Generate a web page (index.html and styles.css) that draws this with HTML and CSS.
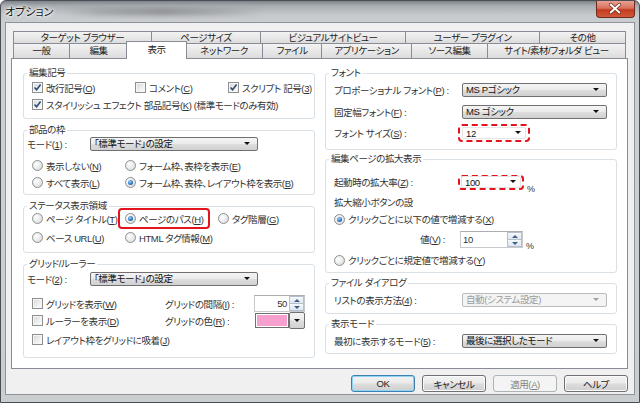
FILE: index.html
```html
<!DOCTYPE html>
<html lang="ja">
<head>
<meta charset="utf-8">
<title>オプション</title>
<link rel="stylesheet" href="styles.css">
</head>
<body>
<div class="window">
  <div class="titlebar">
    <span class="title">オプション</span>
    <span class="ghost"></span>
    <div class="close">
      <svg width="39" height="17" viewBox="0 0 39 17"><path d="M15 4.5 L24 12.5 M24 4.5 L15 12.5" stroke="#6b2318" stroke-width="3.4" stroke-linecap="round"/><path d="M15 4.5 L24 12.5 M24 4.5 L15 12.5" stroke="#ffffff" stroke-width="2" stroke-linecap="round"/></svg>
    </div>
  </div>
  <div class="client">
    <div class="tabs">
      <div class="tabrow back">
        <div class="tab">ターゲット ブラウザー</div>
        <div class="tab">ページサイズ</div>
        <div class="tab">ビジュアルサイトビュー</div>
        <div class="tab">ユーザー プラグイン</div>
        <div class="tab">その他</div>
      </div>
      <div class="tabrow front">
        <div class="tab">一般</div>
        <div class="tab">編集</div>
        <div class="tab sel">表示</div>
        <div class="tab">ネットワーク</div>
        <div class="tab">ファイル</div>
        <div class="tab">アプリケーション</div>
        <div class="tab">ソース編集</div>
        <div class="tab">サイト/素材/フォルダ ビュー</div>
      </div>
    </div>

    <div class="panel">
      <div class="col">
        <fieldset class="g g-marks">
          <legend>編集記号</legend>
          <div class="row">
            <label class="opt w103"><span class="cb"><svg width="9" height="9" viewBox="0 0 9 9"><path d="M1.5 4.5 L3.6 6.8 L7.6 1.6" fill="none" stroke="#2b4a78" stroke-width="1.6"/></svg></span><span>改行記号(<u>O</u>)</span></label>
            <label class="opt w93"><span class="cb"></span><span>コメント(<u>C</u>)</span></label>
            <label class="opt"><span class="cb"><svg width="9" height="9" viewBox="0 0 9 9"><path d="M1.5 4.5 L3.6 6.8 L7.6 1.6" fill="none" stroke="#2b4a78" stroke-width="1.6"/></svg></span><span>スクリプト 記号(<u>3</u>)</span></label>
          </div>
          <div class="row">
            <label class="opt"><span class="cb"><svg width="9" height="9" viewBox="0 0 9 9"><path d="M1.5 4.5 L3.6 6.8 L7.6 1.6" fill="none" stroke="#2b4a78" stroke-width="1.6"/></svg></span><span>スタイリッシュ エフェクト 部品記号(<u>K</u>) (標準モードのみ有効)</span></label>
          </div>
        </fieldset>

        <fieldset class="g g-frame">
          <legend>部品の枠</legend>
          <div class="row mode-row">
            <span class="mode-label">モード(<u>1</u>) :</span>
            <div class="combo w168">「標準モード」の設定</div>
          </div>
          <div class="row mt6">
            <label class="opt w93"><span class="rd"></span><span>表示しない(<u>N</u>)</span></label>
            <label class="opt"><span class="rd"></span><span>フォーム枠、表枠を表示(<u>E</u>)</span></label>
          </div>
          <div class="row">
            <label class="opt w93"><span class="rd"></span><span>すべて表示(<u>L</u>)</span></label>
            <label class="opt"><span class="rd on"></span><span>フォーム枠、表枠、レイアウト枠を表示(<u>B</u>)</span></label>
          </div>
        </fieldset>

        <fieldset class="g g-status">
          <legend>ステータス表示領域</legend>
          <div class="row mtm2">
            <label class="opt w93"><span class="rd"></span><span>ページ タイトル(<u>T</u>)</span></label>
            <div class="w93"><label class="opt mark"><span class="rd on"></span><span>ページのパス(<u>H</u>)</span></label></div>
            <label class="opt"><span class="rd"></span><span>タグ階層(<u>G</u>)</span></label>
          </div>
          <div class="row mt2">
            <label class="opt w93"><span class="rd"></span><span>ベース URL(<u>U</u>)</span></label>
            <label class="opt"><span class="rd"></span><span>HTML タグ情報(<u>M</u>)</span></label>
          </div>
        </fieldset>

        <fieldset class="g g-grid">
          <legend>グリッド/ルーラー</legend>
          <div class="row mode-row mt1">
            <span class="mode-label">モード(<u>2</u>) :</span>
            <div class="combo w168">「標準モード」の設定</div>
          </div>
          <div class="row mt9">
            <label class="opt w133"><span class="cb"></span><span>グリッドを表示(<u>W</u>)</span></label>
            <span class="glabel">グリッドの間隔(<u>I</u>) :</span>
            <div class="spin w51"><span class="spin-val right">50</span><span class="spin-btns"><span class="sb up"></span><span class="sb down"></span></span></div>
          </div>
          <div class="row">
            <label class="opt w133"><span class="cb"></span><span>ルーラーを表示(<u>D</u>)</span></label>
            <span class="glabel">グリッドの色(<u>R</u>) :</span>
            <div class="color"><span class="swatch"></span><span class="dropbtn"></span></div>
          </div>
          <div class="row mt2">
            <label class="opt"><span class="cb"></span><span>レイアウト枠をグリッドに吸着(<u>J</u>)</span></label>
          </div>
        </fieldset>
      </div>

      <div class="col">
        <fieldset class="g g-font">
          <legend>フォント</legend>
          <div class="row r16 mt3">
            <span class="flabel">プロポーショナル フォント(<u>P</u>) :</span>
            <div class="combo w145">MS Pゴシック</div>
          </div>
          <div class="row r16 mt6">
            <span class="flabel">固定幅フォント(<u>F</u>) :</span>
            <div class="combo w145">MS ゴシック</div>
          </div>
          <div class="row r16 mt5">
            <span class="flabel">フォント サイズ(<u>S</u>) :</span>
            <div class="dash big"><div class="combo edit w64">12</div></div>
          </div>
        </fieldset>

        <fieldset class="g g-zoom">
          <legend>編集ページの拡大表示</legend>
          <div class="row r16 mt9">
            <span class="flabel">起動時の拡大率(<u>Z</u>) :</span>
            <div class="dash small"><div class="combo edit w60">100</div></div>
            <span class="pct">%</span>
          </div>
          <div class="row r16 mt4">
            <span class="sub">拡大縮小ボタンの設</span>
          </div>
          <div class="row r16 mt1">
            <label class="opt"><span class="rd on"></span><span>クリックごとに以下の値で増減する(<u>X</u>)</span></label>
          </div>
          <div class="row r16 mt4">
            <span class="vlabel">値(<u>V</u>) :</span>
            <div class="spin w63"><span class="spin-val">10</span><span class="spin-btns"><span class="sb up"></span><span class="sb down"></span></span></div>
            <span class="pct">%</span>
          </div>
          <div class="row r16 mt5">
            <label class="opt"><span class="rd"></span><span>クリックごとに規定値で増減する(<u>Y</u>)</span></label>
          </div>
        </fieldset>

        <fieldset class="g g-dialog">
          <legend>ファイル ダイアログ</legend>
          <div class="row r16 mt3">
            <span class="flabel">リストの表示方法(<u>4</u>) :</span>
            <div class="combo w145 disabled">自動(システム設定)</div>
          </div>
        </fieldset>

        <fieldset class="g g-view">
          <legend>表示モード</legend>
          <div class="row r16 mt3">
            <span class="flabel">最初に表示するモード(<u>5</u>) :</span>
            <div class="combo w145">最後に選択したモード</div>
          </div>
        </fieldset>
      </div>
    </div>

    <div class="buttons">
      <button class="btn default">OK</button>
      <button class="btn">キャンセル</button>
      <button class="btn disabled">適用(<u>A</u>)</button>
      <button class="btn">ヘルプ</button>
    </div>
  </div>
</div>
</body>
</html>
```

FILE: styles.css
```css
* { box-sizing: border-box; }
html, body { margin: 0; padding: 0; }
body {
  width: 640px; height: 403px; overflow: hidden;
  font-family: "Liberation Sans", "Noto Sans CJK JP", sans-serif;
  font-size: 9.5px; color: #333333;
  font-feature-settings: "palt";
  text-autospace: no-autospace;
  letter-spacing: -0.4px;
  background: #ffffff;
}
u {
  text-decoration: underline; text-underline-offset: 1px;
  font-family: "Liberation Sans", sans-serif;
}

.window {
  width: 640px; height: 403px;
  border: 1px solid #4a4d52;
  border-radius: 6px 6px 0 0;
  background: linear-gradient(180deg, #7d848b 0px, #a9aeb3 5px, #c6c9cc 14px, #cdd0d3 24px, #cbced1 100%);
  display: flex; flex-direction: column;
}

.titlebar {
  height: 21px; display: flex; align-items: flex-start;
  padding-left: 4px; position: relative;
}
.title {
  font-size: 11px; line-height: 20px; color: #111; letter-spacing: 0;
  font-family: "Noto Sans CJK JP", sans-serif;
  text-shadow: 0 0 5px #fff, 0 0 3px #fff, 0 0 2px #fff;
}
.ghost {
  width: 200px; height: 8px; margin: 7px 0 0 10px;
  background: linear-gradient(90deg, rgba(90,90,90,0) 0%, rgba(90,90,90,0.25) 20%, rgba(70,70,70,0.35) 50%, rgba(90,90,90,0.2) 80%, rgba(90,90,90,0) 100%);
  filter: blur(2px);
}
.close {
  margin-left: auto; margin-right: 4px;
  width: 39px; height: 17px;
  border: 1px solid #6e2a20; border-top: none;
  border-radius: 0 0 4px 4px;
  background: linear-gradient(180deg, #e8a293 0%, #d8705c 45%, #c4391f 55%, #cf5a3b 100%);
  display: flex;
}
.close svg { display: block; margin: -1px 0 0 -1px; }

.client {
  margin: 0 4px 0 4px;
  height: 373px;
  border: 1px solid #8f9398;
  background: #f0f0f0;
}

.tabs { margin: 8px 0 0 7px; width: 613px; }
.tabrow { display: grid; }
.back { grid-template-columns: 139px 109px 145px 134px 86px; height: 12px; }
.front { grid-template-columns: 57px 58px 58px 77px 59px 90px 76px 138px; height: 15px; }
.tab {
  border: 1px solid #898c95; border-bottom: none;
  margin-left: -1px;
  background: linear-gradient(180deg, #f3f3f3 0%, #e8e8e8 50%, #dcdcdc 100%);
  text-align: center; color: #222;
  font-size: 9.5px; white-space: nowrap; overflow: hidden;
}
.tab:first-child { margin-left: 0; }
.back .tab { line-height: 11px; }
.front .tab { line-height: 14px; }
.tab.sel {
  background: #ffffff;
  margin-top: -2px; margin-bottom: -1px;
  margin-left: -2px; margin-right: -1px;
  position: relative; z-index: 1;
  line-height: 16px;
}

.panel {
  margin-left: 5px; width: 617px; height: 311px;
  border: 1px solid #898c95; background: #ffffff;
  display: grid; grid-template-columns: 292px 292px; column-gap: 10px;
  align-content: start;
  padding: 8px 0 0 11px;
}
.col { display: flex; flex-direction: column; }

.g {
  margin: 0; padding: 0 0 0 8px;
  border: 1px solid #d9e0e6; border-radius: 3px;
  min-width: 0;
}
.g legend {
  padding: 0 2px; margin-left: -5px;
  line-height: 12px; font-size: 9.5px; color: #333;
}
.g-marks { height: 52px; }
.g-frame { height: 71px; margin-top: 5px; }
.g-status { height: 53px; margin-top: 5px; }
.g-grid { height: 100px; margin-top: 5px; }
.g-font { height: 83px; }
.g-zoom { height: 120px; margin-top: 3px; }
.g-dialog { height: 37px; margin-top: 4px; }
.g-view { height: 36px; margin-top: 4px; }

.row { display: flex; align-items: center; height: 17px; white-space: nowrap; }
.row.r16 { height: 16px; }
.mode-row { height: 15px; margin-left: -5px; }
.mt1 { margin-top: 1px; }
.mt2 { margin-top: 2px; }
.mt3 { margin-top: 3px; }
.mt4 { margin-top: 4px; }
.mt5 { margin-top: 5px; }
.mt6 { margin-top: 6px; }
.mt9 { margin-top: 9px; }
.mtm2 { margin-top: -2px; }

.w93 { width: 93px; flex: none; }
.w103 { width: 103px; flex: none; }
.w133 { width: 133px; flex: none; }

.opt { display: flex; align-items: center; gap: 3px; }
.cb {
  width: 11px; height: 11px; flex: none;
  border: 1px solid #8e8f8f;
  background: linear-gradient(135deg, #d6d6d6 0%, #f0f0f0 60%, #fdfdfd 100%);
  box-shadow: inset 0 0 0 1px #f6f6f6;
  display: flex; align-items: center; justify-content: center;
}
.cb svg { display: block; }
.rd {
  width: 11px; height: 11px; flex: none; border-radius: 50%;
  border: 1px solid #8e8f8f;
  background: radial-gradient(circle at 35% 35%, #ffffff 0%, #e9e9e9 55%, #cfcfcf 100%);
  display: flex; align-items: center; justify-content: center;
}
.rd.on::after {
  content: ""; width: 5px; height: 5px; border-radius: 50%;
  background: radial-gradient(circle at 40% 35%, #9fd3f7 0%, #2f78c4 55%, #17457f 100%);
}
.opt.mark {
  display: inline-flex;
  border: 2px solid #e3141b; border-radius: 4px;
  margin-left: -7px; padding: 2px 5px 2px 5px;
  height: 21px;
}

.mode-label { width: 63px; flex: none; }
.glabel { width: 89px; flex: none; }
.flabel { width: 128px; flex: none; }
.vlabel { width: 40px; flex: none; margin-left: 86px; }
.pct { align-self: flex-end; margin-left: 3px; font-size: 9px; line-height: 10px; margin-bottom: -4px; }

.combo {
  position: relative;
  height: 14px; line-height: 12px;
  border: 1px solid #707070; border-radius: 2px;
  background: linear-gradient(180deg, #f4f4f4 0%, #ebebeb 48%, #dddddd 52%, #d1d1d1 100%);
  padding: 0 0 0 3px; color: #111;
  font-size: 9.5px;
}
.combo::after {
  content: ""; position: absolute; right: 7px; top: 4px;
  border-left: 3px solid transparent; border-right: 3px solid transparent;
  border-top: 3px solid #111;
}
.w168 { width: 168px; }
.w145 { width: 145px; }
.w64 { width: 64px; }
.w60 { width: 60px; }
.combo.edit {
  background: #ffffff; border-color: #e4e4e4; height: 12px; line-height: 11px;
}
.combo.edit::after { top: 3px; right: 4px; }
.combo.disabled {
  background: #f4f4f4; border-color: #b9bcbf; color: #9a9a9a;
}
.combo.disabled::after { border-top-color: #a0a0a0; }

.dash {
  border: 2px dashed #e3141b; border-radius: 4px;
  display: flex; align-items: center; flex: none;
}
.dash.big { margin-left: -4px; padding: 1px 2px; height: 18px; }
.dash.small { margin-left: -4px; padding: 0 1px; height: 15px; }

.spin {
  display: flex; height: 17px; flex: none;
  border: 1px solid #c6c9cd; border-top-color: #abadb3;
  background: #ffffff;
}
.w51 { width: 51px; }
.w63 { width: 63px; }
.spin-val { flex: 1; padding-left: 2px; line-height: 15px; }
.spin-val.right { text-align: right; padding-right: 2px; }
.spin-btns { width: 15px; display: flex; flex-direction: column; }
.sb {
  flex: 1; position: relative;
  border: 1px solid #b4c0cc;
  background: linear-gradient(180deg, #f6f8fa, #dfe6ee);
}
.sb.down { border-top: none; }
.sb::after {
  content: ""; position: absolute; left: 4px; top: 2px;
  border-left: 3px solid transparent; border-right: 3px solid transparent;
}
.sb.up::after { border-bottom: 3px solid #3c5f8a; }
.sb.down::after { border-top: 3px solid #3c5f8a; top: 2px; }

.color { display: flex; margin-left: 1px; height: 17px; }
.swatch {
  width: 34px; height: 15px; margin-top: 1px;
  border: 1px solid #707070; background: #f79fcf;
  box-shadow: inset 0 0 0 1px #ffffff;
}
.dropbtn {
  width: 16px; height: 17px; position: relative;
  border: 1px solid #707070; border-radius: 2px;
  background: linear-gradient(180deg, #f4f4f4 0%, #ebebeb 48%, #dddddd 52%, #d1d1d1 100%);
}
.dropbtn::after {
  content: ""; position: absolute; left: 4px; top: 6px;
  border-left: 3px solid transparent; border-right: 3px solid transparent;
  border-top: 3px solid #111;
}

.buttons {
  display: flex; justify-content: flex-end; gap: 7px;
  padding-right: 6px; margin-top: 6px;
}
.btn {
  width: 64px; height: 17px; padding: 0;
  font-family: inherit; font-size: 9.5px; color: #222;
  font-feature-settings: "palt"; letter-spacing: -0.4px;
  border: 1px solid #707070; border-radius: 3px;
  background: linear-gradient(180deg, #f2f2f2 0%, #ebebeb 48%, #dddddd 52%, #cfcfcf 100%);
  box-shadow: inset 0 0 0 1px #fbfbfb;
}
.btn.default {
  border-color: #3c7fb1;
  box-shadow: inset 0 0 0 1px #8fd3f5;
}
.btn.disabled {
  border-color: #adb2b5; background: #f4f4f4; color: #838383; box-shadow: none;
}
```
